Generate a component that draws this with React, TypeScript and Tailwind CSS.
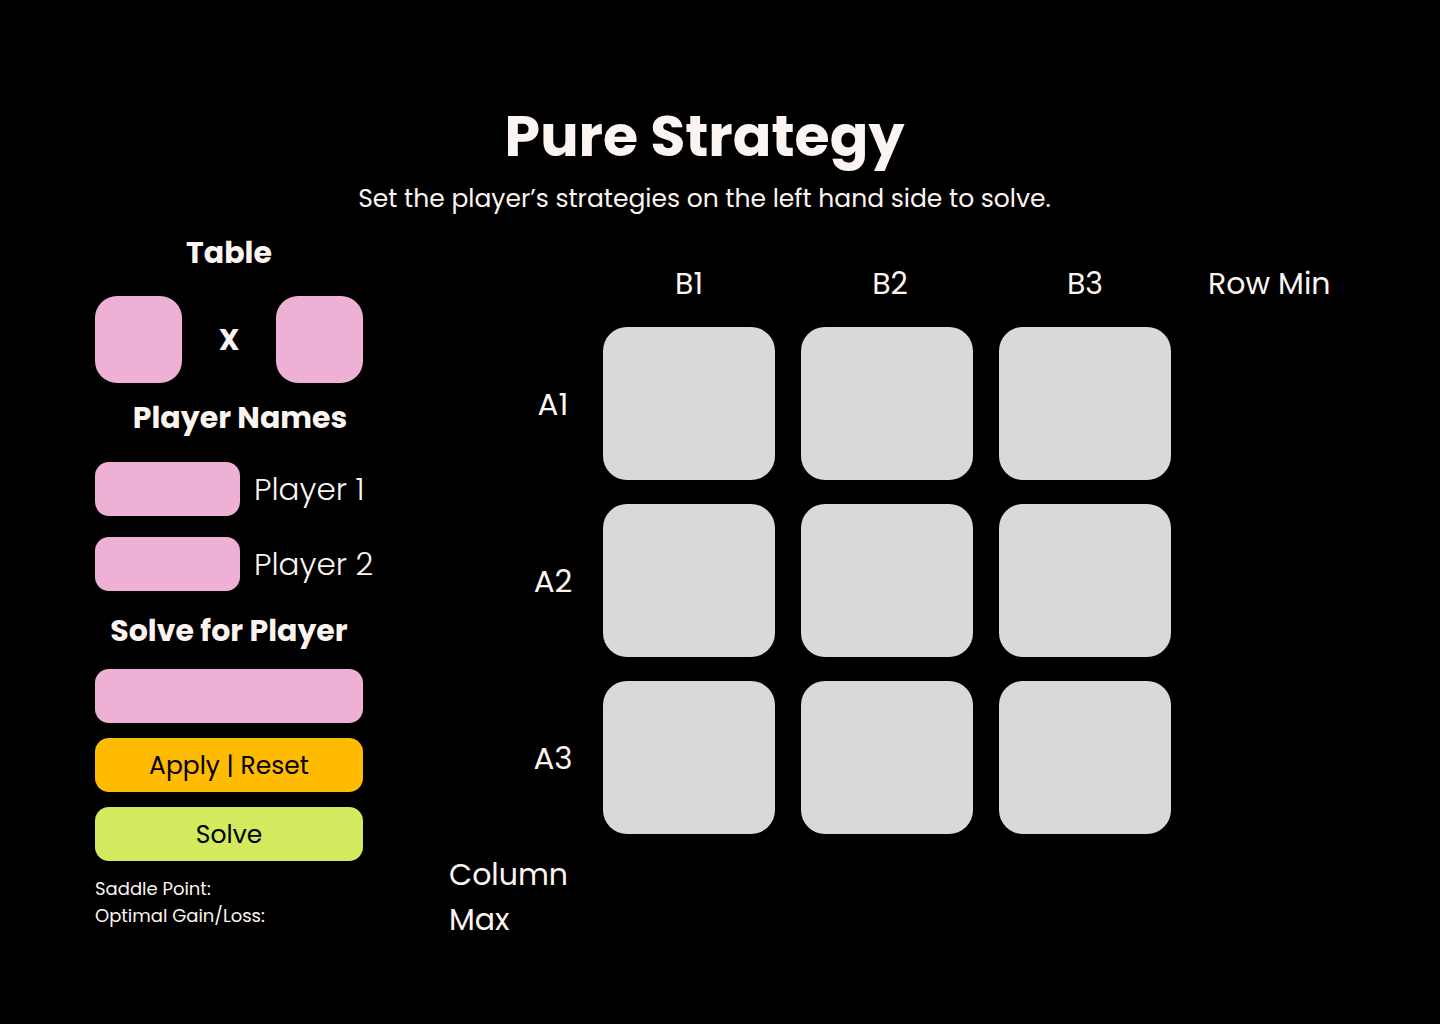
import React from "react";

const txt = "text-[#fcf4f0]";

function Cell() {
  return <div className="w-[172px] h-[153px] rounded-[24px] bg-[#d9d9d9]" />;
}

function CellRow({ label }: { label: string }) {
  return (
    <div className="flex items-center">
      <div className="w-[154px] pl-[54px] shrink-0">
        <div className={`w-[100px] text-center text-[31px] leading-[36px] ${txt}`}>{label}</div>
      </div>
      <div className="flex gap-[26px]">
        <Cell />
        <Cell />
        <Cell />
      </div>
    </div>
  );
}

export default function App() {
  return (
    <div
      className="w-[1440px] h-[1024px] bg-black overflow-hidden flex flex-col"
      style={{ fontFamily: "Poppins, Inter, 'Noto Sans', sans-serif" }}
    >
      <div className="pt-[101px] pr-[31px] flex flex-col items-center">
        <h1 className={`text-[57px] leading-[70px] font-bold ${txt}`}>Pure Strategy</h1>
        <p className={`mt-[11px] text-[25px] leading-[34px] ${txt}`}>
          Set the player’s strategies on the left hand side to solve.
        </p>
      </div>

      <div className="mt-[20px] flex pl-[95px]">
        {/* Left panel */}
        <div className="w-[268px] shrink-0 flex flex-col">
          <h2 className={`text-center text-[30px] leading-[34px] font-bold ${txt}`}>Table</h2>
          <div className="mt-[26px] flex items-center justify-between">
            <div className="w-[87px] h-[87px] rounded-[22px] bg-[#efb0d6]" />
            <span className={`text-[29px] leading-[34px] font-bold ${txt}`}>X</span>
            <div className="w-[87px] h-[87px] rounded-[22px] bg-[#efb0d6]" />
          </div>
          <h2 className={`mt-[18px] ml-[22px] text-center text-[30px] leading-[34px] font-bold whitespace-nowrap ${txt}`}>
            Player Names
          </h2>
          <div className="mt-[27px] flex items-center gap-[14px]">
            <div className="w-[145px] h-[54px] shrink-0 rounded-[14px] bg-[#efb0d6]" />
            <span className={`text-[31px] font-light whitespace-nowrap ${txt}`}>Player 1</span>
          </div>
          <div className="mt-[21px] flex items-center gap-[14px]">
            <div className="w-[145px] h-[54px] shrink-0 rounded-[14px] bg-[#efb0d6]" />
            <span className={`text-[31px] font-light whitespace-nowrap ${txt}`}>Player 2</span>
          </div>
          <h2 className={`mt-[23px] text-center text-[30px] leading-[34px] font-bold whitespace-nowrap ${txt}`}>
            Solve for Player
          </h2>
          <div className="mt-[21px] h-[54px] rounded-[14px] bg-[#efb0d6]" />
          <button className="mt-[15px] h-[54px] rounded-[14px] bg-[#ffbb00] text-black text-[25px] pt-[2px]">
            Apply | Reset
          </button>
          <button className="mt-[15px] h-[54px] rounded-[14px] bg-[#d3e95e] text-black text-[25px] pt-[2px]">
            Solve
          </button>
          <div className={`mt-[14px] text-[18px] leading-[27px] whitespace-nowrap ${txt}`}>
            <div>Saddle Point:</div>
            <div>Optimal Gain/Loss:</div>
          </div>
        </div>

        {/* Right: matrix */}
        <div className="ml-[86px] flex flex-col">
          <div className="h-[91px] flex items-end pb-[26px]">
            <div className="w-[154px] shrink-0" />
            <div className="flex gap-[26px]">
              <div className={`w-[172px] text-center text-[30px] leading-[34px] ${txt}`}>B1</div>
              <div className={`w-[172px] text-center text-[30px] leading-[34px] pl-[6px] ${txt}`}>B2</div>
              <div className={`w-[172px] text-center text-[30px] leading-[34px] ${txt}`}>B3</div>
            </div>
            <div className={`pl-[37px] text-[30px] leading-[34px] whitespace-nowrap ${txt}`}>Row Min</div>
          </div>
          <div className="flex flex-col gap-[24px]">
            <CellRow label="A1" />
            <CellRow label="A2" />
            <CellRow label="A3" />
          </div>
          <div className={`mt-[18px] text-[30px] leading-[45px] ${txt}`}>
            <div>Column</div>
            <div>Max</div>
          </div>
        </div>
      </div>
    </div>
  );
}
